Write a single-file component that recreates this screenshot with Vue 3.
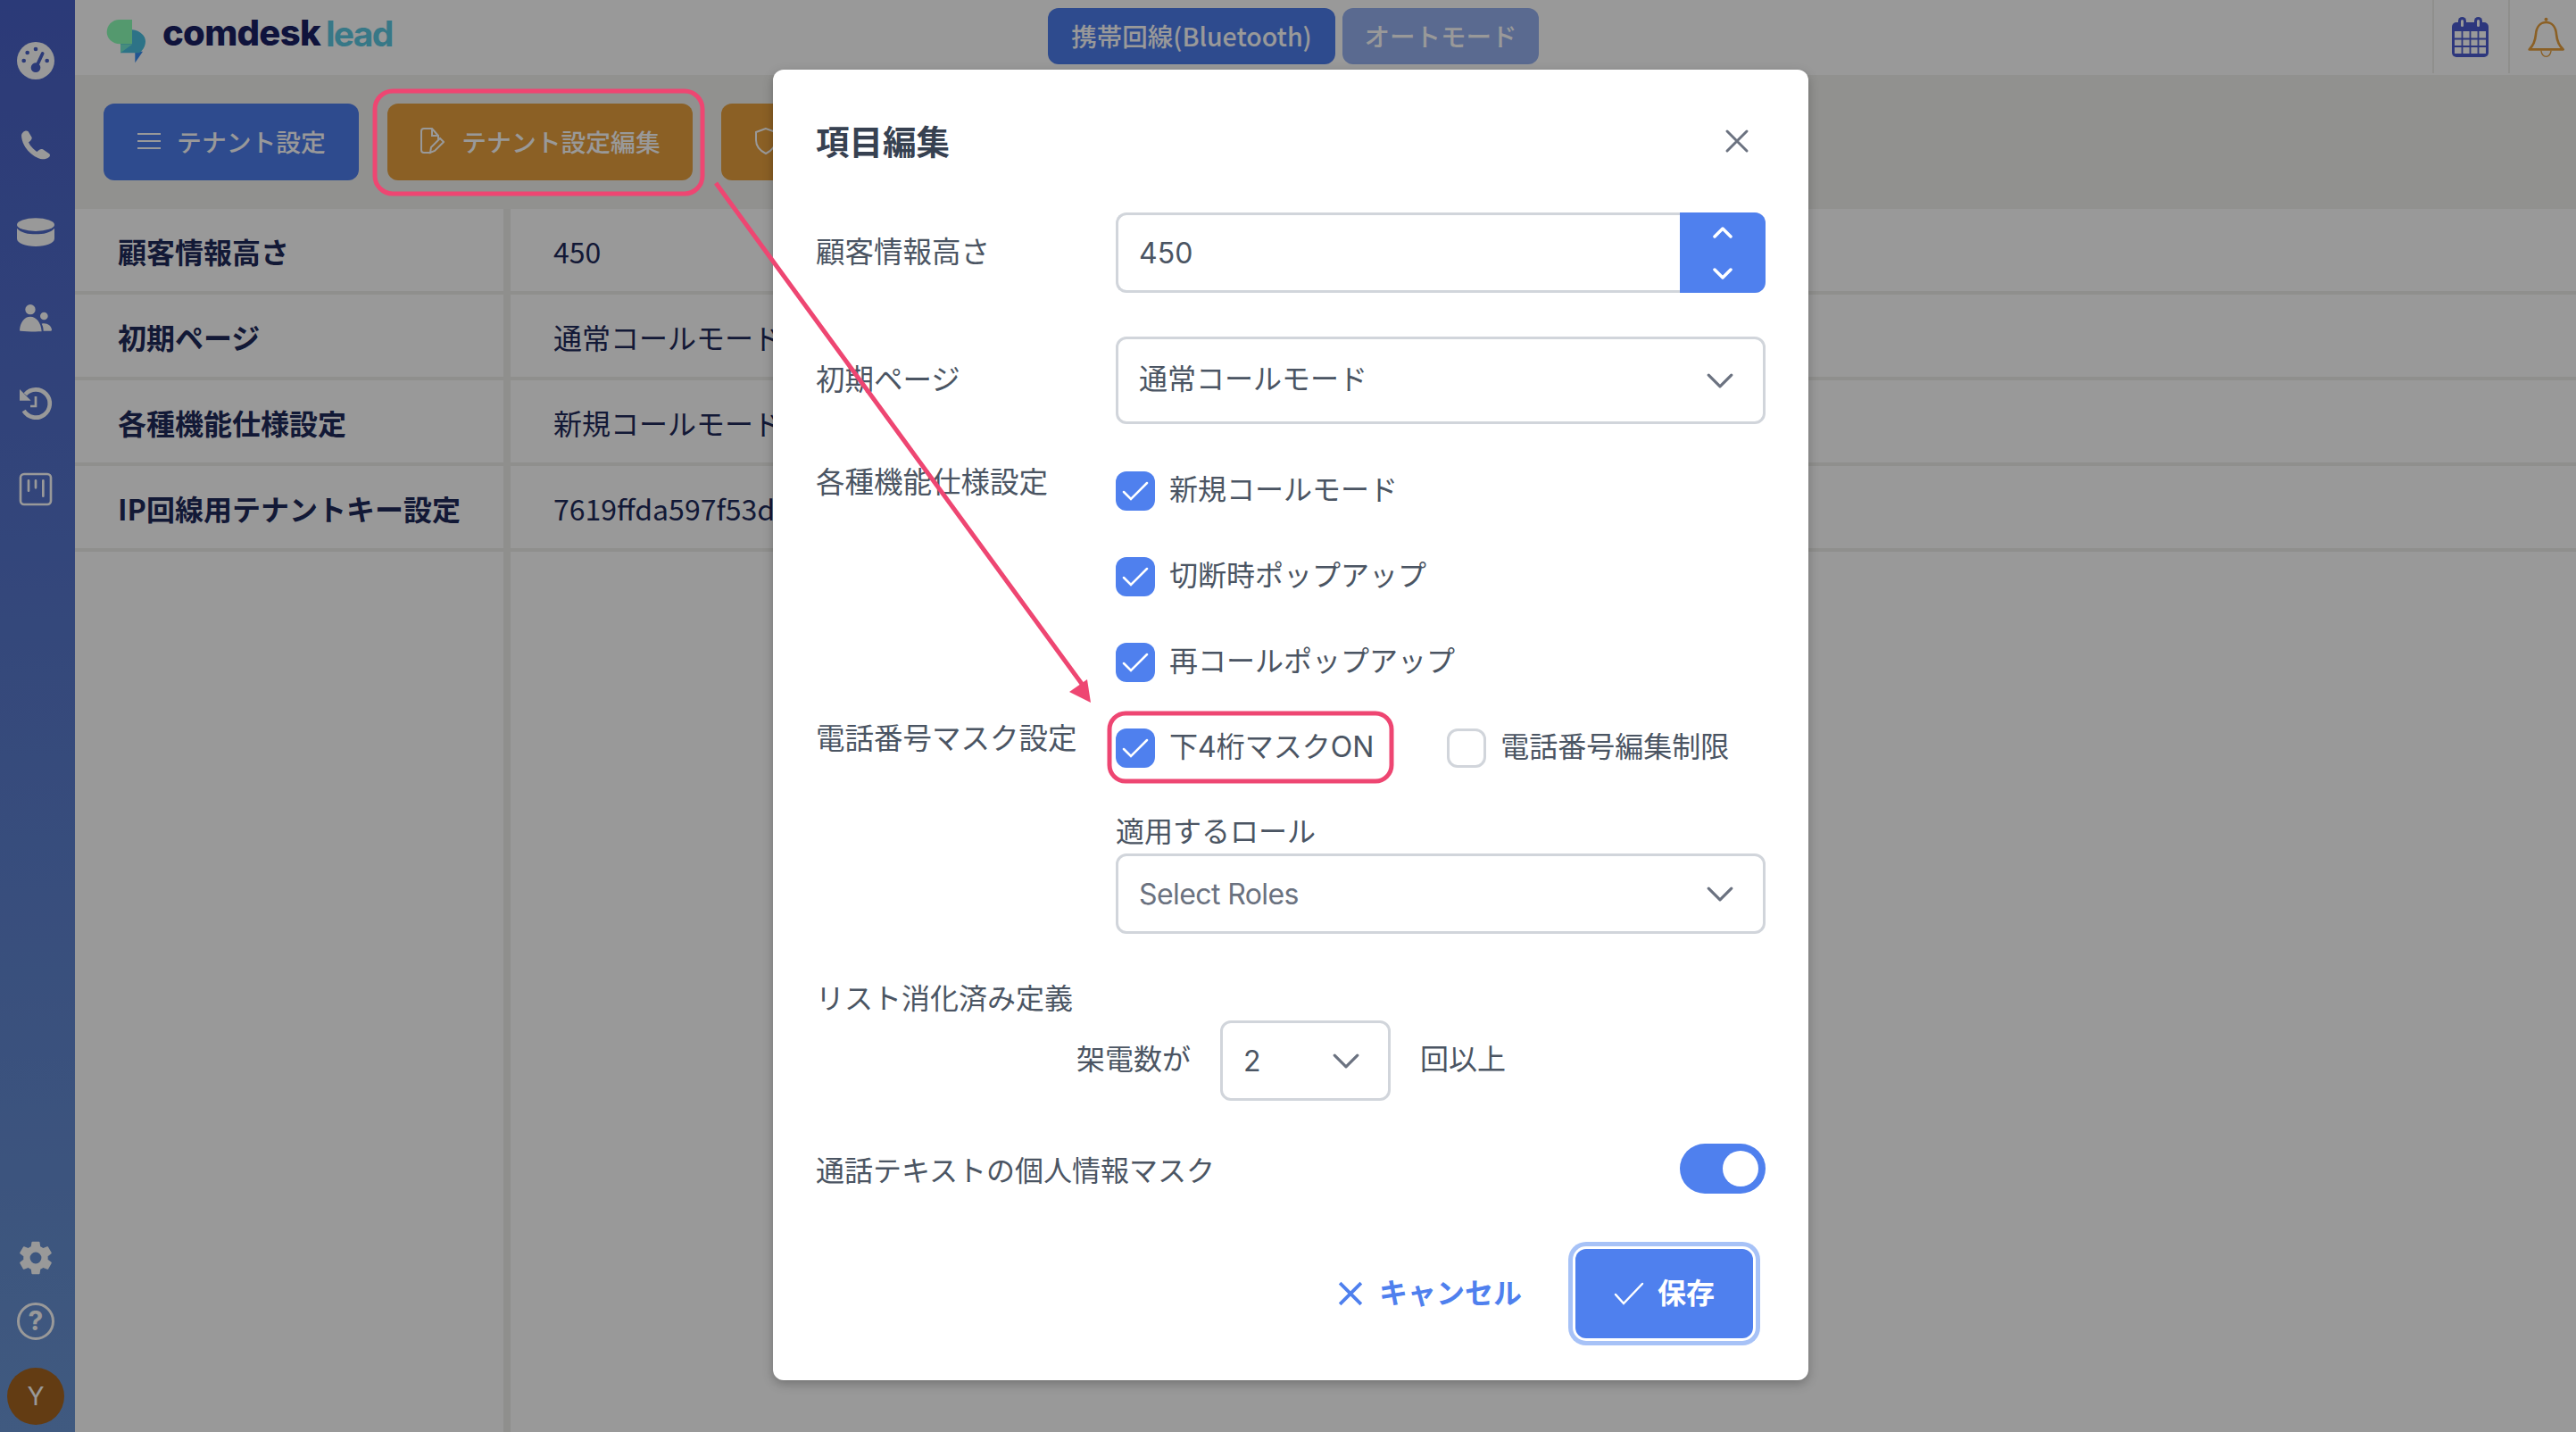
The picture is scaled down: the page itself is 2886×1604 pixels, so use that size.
<script setup>
const rows = [
  { label: '顧客情報高さ', value: '450' },
  { label: '初期ページ', value: '通常コールモード' },
  { label: '各種機能仕様設定', value: '新規コールモード' },
  { label: 'IP回線用テナントキー設定', value: '7619ffda597f53d' }
]
const features = ['新規コールモード', '切断時ポップアップ', '再コールポップアップ']
</script>

<template>
  <div class="page">
    <aside class="side">
      <div class="side-top">
        <svg class="ico" viewBox="54 47 132 132"><circle cx="120" cy="113" r="63" fill="#fff" /><g fill="#4961c8"><circle cx="92" cy="86" r="7" /><circle cx="120" cy="74" r="7" /><circle cx="80" cy="113" r="7" /><circle cx="158" cy="113" r="7" /><circle cx="120" cy="136" r="16" /></g><path d="M143 89 122 134" stroke="#4961c8" stroke-width="11" stroke-linecap="round" /></svg>
        <svg class="ico" viewBox="54 336 132 132"><path fill="#fff" d="M72 365C74 352 88 345 95 352L107 372C108 380 100 385 96 388 100 398 112 412 124 420 130 416 136 408 144 412L166 427C172 434 164 442 150 445 120 447 74 410 72 365Z" /></svg>
        <svg class="ico" viewBox="54 624 132 132"><ellipse cx="120" cy="665" rx="63" ry="22" fill="#fff" /><path fill="#fff" d="M57 677C70 692 95 697 120 697S170 692 183 677V712C183 728 155 738 120 738S57 728 57 712Z" /></svg>
        <svg class="ico" viewBox="54 40 132 132"><circle cx="102" cy="78" r="17" fill="#fff" /><circle cx="148" cy="100" r="13" fill="#fff" /><path fill="#fff" d="M66 148C68 120 82 102 102 102 122 102 138 122 140 152 115 153 85 152 70 150 67 150 66 150 66 148Z" /><path fill="#fff" d="M140 126C158 122 172 132 174 146 174 149 174 150 170 150L146 150C146 140 144 132 140 126Z" /></svg>
        <svg class="ico" viewBox="54 330 132 132" fill="none" stroke="#fff"><path d="M85 365A47 47 0 1 1 80 420" stroke-width="14" /><path d="M66 348V386H104Z" fill="#fff" stroke="none" /><path d="M120 372V405H102" stroke-width="8" /></svg>
        <svg class="ico" viewBox="54 617 132 132" fill="none" stroke="#fff" stroke-linecap="round"><rect x="69" y="632" width="102" height="102" rx="12" stroke-width="8" /><path d="M96 654V688M120 654V678M145 654V706" stroke-width="8" /></svg>
      </div>
      <div class="side-bottom">
        <svg class="ico" viewBox="0 0 24 24"><path fill="#fff" fill-rule="evenodd" d="M19.400 13c.04-.33.060-.66.060-1s-.020-.67-.060-1l2.100-1.650c.19-.15.24-.42.120-.64l-2-3.460c-.12-.22-.39-.3-.61-.22l-2.490 1c-.52-.4-1.080-.73-1.690-.98l-.38-2.650A.49.49 0 0 0 14 2h-4c-.25 0-.46.18-.49.42l-.38 2.650c-.61.25-1.170.59-1.690.98l-2.490-1a.5.5 0 0 0-.61.22l-2 3.460c-.13.220-.07.490.12.640L4.570 11c-.04.330-.07.670-.07 1s.03.670.07 1l-2.110 1.650c-.19.150-.24.420-.12.640l2 3.460c.12.220.39.300.61.220l2.490-1c.520.400 1.080.730 1.690.980l.38 2.650c.03.240.24.420.49.420h4c.25 0 .46-.18.49-.42l.38-2.650c.61-.25 1.170-.59 1.690-.98l2.490 1c.23.080.49 0 .61-.22l2-3.460c.12-.22.070-.49-.12-.64zM12 15.500a3.500 3.500 0 1 1 0-7 3.500 3.500 0 0 1 0 7z" /></svg>
        <svg class="ico help" viewBox="0 0 44 44"><circle cx="22" cy="22" r="19.500" fill="none" stroke="#fff" stroke-width="3" /><text x="22" y="32" text-anchor="middle" class="help-q">?</text></svg>
        <div class="avatar">Y</div>
      </div>
    </aside>

    <div class="main">
      <header class="top">
        <div class="logo">
          <svg class="logo-mark" viewBox="55 60 135 150">
            <path fill="#3a8ef2" d="M152 170H178L152 208Z" />
            <path fill="#4bc0e1" d="M142 97C170 100 187 118 187 136 187 155 175 170 165 175H103V140H142Z" />
            <path fill="#8cffb7" d="M100 63H142V145H102C75 145 57 125 57 105 57 82 75 63 100 63Z" />
            <path fill="#75e9d0" d="M103 175V146H142Z" />
          </svg>
          <span class="logo-a">comdesk</span><span class="logo-b">lead</span>
        </div>
        <div class="modes">
          <button class="mode on">携帯回線(Bluetooth)</button>
          <button class="mode off">オートモード</button>
        </div>
        <div class="top-right">
          <div class="top-cell cal-cell">
            <svg class="cal" viewBox="0 0 41 45">
              <rect x="0" y="6" width="41" height="39" rx="5" fill="#4b5cd0" />
              <rect x="7" y="0" width="9" height="14" rx="4.500" fill="#4b5cd0" />
              <rect x="25" y="0" width="9" height="14" rx="4.500" fill="#4b5cd0" />
              <rect x="10" y="3" width="3" height="8" rx="1.500" fill="#fff" />
              <rect x="28" y="3" width="3" height="8" rx="1.500" fill="#fff" />
              <path d="M3 16h35v25H3z" fill="#fff" />
              <path d="M3 24.500h35M3 33h35M11.500 16v25M20.500 16v25M29.500 16v25" stroke="#4b5cd0" stroke-width="1.800" />
            </svg>
          </div>
          <div class="top-cell bell-cell">
            <svg class="bell" viewBox="332 50 130 140" fill="none" stroke="#e8a03f" stroke-linejoin="round">
              <path d="M340 162C352 150 360 135 362 112 364 85 378 70 397 70 416 70 430 85 432 112 434 135 442 150 455 162Z" stroke-width="8" />
              <circle cx="397" cy="60" r="6" fill="#e8a03f" stroke="none" />
              <path d="M380 166C382 180 390 186 397 186 404 186 412 180 414 166" stroke-width="4" />
            </svg>
          </div>
        </div>
      </header>

      <div class="toolbar">
        <button class="tbtn blue">
          <svg viewBox="0 0 28 24" fill="none" stroke="#fff" stroke-width="2"><path d="M1 4h26M1 12h26M1 20h26" /></svg>
          テナント設定
        </button>
        <button class="tbtn orange edit">
          <svg viewBox="0 0 28 32" fill="none" stroke="#fff" stroke-width="2"><path d="M13 29H5c-2 0-3-1-3-3V5c0-2 1-3 3-3h9l7 8v5" /><path d="M14 2v8h7" /><path d="M12 29l1-6 10-10 4 4-10 10z" /></svg>
          テナント設定編集
        </button>
        <button class="tbtn orange sec">
          <svg viewBox="0 0 28 32" fill="none" stroke="#fff" stroke-width="2"><path d="M14 2 3 6v9c0 7 5 12 11 15 6-3 11-8 11-15V6z" /></svg>
        </button>
      </div>

      <div class="table">
        <template v-for="r in rows" :key="r.label">
          <div class="cell key">{{ r.label }}</div>
          <div class="cell val">{{ r.value }}</div>
        </template>
        <div class="fill"></div>
        <div></div>
      </div>
    </div>

    <div class="overlay">
      <div class="modal">
        <div class="m-head">
          <h2>項目編集</h2>
          <svg class="close" viewBox="0 0 28 28" fill="none" stroke="#6b7280" stroke-width="3" stroke-linecap="round"><path d="M3 3l22 22M25 3 3 25" /></svg>
        </div>

        <div class="row r-num">
          <label>顧客情報高さ</label>
          <div class="num">
            <div class="num-val">450</div>
            <div class="num-btn">
              <svg viewBox="0 0 22 13" fill="none" stroke="#fff" stroke-width="3.500" stroke-linecap="round" stroke-linejoin="round"><path d="M2 11l9-9 9 9" /></svg>
              <svg viewBox="0 0 22 13" fill="none" stroke="#fff" stroke-width="3.500" stroke-linecap="round" stroke-linejoin="round"><path d="M2 2l9 9 9-9" /></svg>
            </div>
          </div>
        </div>

        <div class="row r-page">
          <label>初期ページ</label>
          <div class="sel tall">
            <span class="lift">通常コールモード</span>
            <svg class="chev" viewBox="0 0 28 16" fill="none" stroke="#6b7280" stroke-width="3" stroke-linecap="round" stroke-linejoin="round"><path d="M2 2l12 12L26 2" /></svg>
          </div>
        </div>

        <div class="row r-feat">
          <label>各種機能仕様設定</label>
          <div class="checks">
            <div v-for="f in features" :key="f" class="chk">
              <span class="box on"><svg viewBox="0 0 30 22" fill="none" stroke="#fff" stroke-width="2.500" stroke-linecap="round"><path d="M2 12l8 8L28 2" /></svg></span>
              <span class="lift">{{ f }}</span>
            </div>
          </div>
        </div>

        <div class="row r-mask">
          <label>電話番号マスク設定</label>
          <div class="mask">
            <div class="chk-line">
              <div class="chk">
                <span class="box on"><svg viewBox="0 0 30 22" fill="none" stroke="#fff" stroke-width="2.500" stroke-linecap="round"><path d="M2 12l8 8L28 2" /></svg></span>
                <span class="lift">下4桁マスクON</span>
              </div>
              <div class="chk second">
                <span class="box"></span>
                <span class="lift">電話番号編集制限</span>
              </div>
            </div>
            <div class="role-label">適用するロール</div>
            <div class="sel">
              <span class="ph">Select Roles</span>
              <svg class="chev" viewBox="0 0 28 16" fill="none" stroke="#6b7280" stroke-width="3" stroke-linecap="round" stroke-linejoin="round"><path d="M2 2l12 12L26 2" /></svg>
            </div>
          </div>
        </div>

        <div class="list-title">リスト消化済み定義</div>
        <div class="list-line">
          <span class="lift">架電数が</span>
          <div class="sel small">
            <span>2</span>
            <svg class="chev" viewBox="0 0 28 16" fill="none" stroke="#6b7280" stroke-width="3" stroke-linecap="round" stroke-linejoin="round"><path d="M2 2l12 12L26 2" /></svg>
          </div>
          <span class="lift">回以上</span>
        </div>

        <div class="toggle-row">
          <span>通話テキストの個人情報マスク</span>
          <div class="toggle"><i></i></div>
        </div>

        <div class="m-foot">
          <button class="cancel">
            <svg viewBox="0 0 26 26" fill="none" stroke="#4f80ee" stroke-width="3.500"><path d="M2 2l22 22M24 2 2 24" /></svg>
            キャンセル
          </button>
          <button class="save">
            <svg viewBox="0 0 34 26" fill="none" stroke="#fff" stroke-width="2.500" stroke-linecap="round"><path d="M2 14l9 10L32 2" /></svg>
            保存
          </button>
        </div>
      </div>
    </div>

    <!-- 赤枠と矢印の注釈 -->
    <svg class="notes" viewBox="0 0 2886 1604" fill="none" stroke="#ee4672" stroke-width="5">
      <rect x="420" y="102" width="367" height="115" rx="20" />
      <rect x="1243" y="799" width="316" height="76" rx="18" />
      <path d="M802 205 1212 766" />
      <path d="M1222 787 1198 775 1218 761z" fill="#ee4672" stroke="none" />
    </svg>
  </div>
</template>

<style scoped>
.page {
  position: relative;
  display: flex;
  width: 2886px;
  height: 1604px;
  overflow: hidden;
  background: #fff;
  font-family: "Noto Sans CJK JP", "Noto Sans", sans-serif;
  font-size: 32px;
  color: #1f2a5a;
}

.side {
  width: 84px;
  flex: none;
  box-sizing: border-box;
  padding-right: 4px;
  display: flex;
  flex-direction: column;
  justify-content: space-between;
  align-items: center;
  background: linear-gradient(180deg, #4961c8, #6b96d5);
}
.side-top {
  display: flex;
  flex-direction: column;
  align-items: center;
  gap: 52px;
  padding-top: 46px;
}
.side-bottom {
  display: flex;
  flex-direction: column;
  align-items: center;
  padding-bottom: 8px;
}
.ico { width: 44px; height: 44px; display: block; }
.help { margin: 27px 0 30px; }
.help-q { font-family: "Inter", sans-serif; font-size: 30px; font-weight: 700; fill: #fff; }
.avatar {
  width: 64px;
  height: 64px;
  border-radius: 50%;
  background: #a56421;
  color: #fff;
  display: flex;
  align-items: center;
  justify-content: center;
  font-family: "Inter", sans-serif;
  font-size: 28px;
}

.main {
  flex: 1;
  display: flex;
  flex-direction: column;
  min-width: 0;
}
.top {
  height: 84px;
  flex: none;
  display: flex;
  align-items: flex-start;
  background: #fff;
}
.logo {
  width: 1090px;
  flex: none;
  display: flex;
  align-items: center;
  padding: 21px 0 0 35px;
  box-sizing: border-box;
  font-family: "Inter", sans-serif;
  font-weight: 800;
  font-size: 40px;
  line-height: 1;
}
.logo-mark { width: 45px; height: 50px; margin-right: 18px; align-self: flex-start; }
.logo-a { color: #1a2164; letter-spacing: -.700px; margin-top: -18px; }
.logo-b { color: #5cc8e1; letter-spacing: -1.700px; margin: -18px 0 0 6px; font-weight: 700; font-size: 39px; }
.modes { display: flex; gap: 8px; padding-top: 9px; }
.mode {
  height: 63px;
  border: none;
  border-radius: 12px;
  padding: 0 0 2px;
  color: #fff;
  font: 500 28.500px "Noto Sans CJK JP", sans-serif;
}
.mode.on { width: 322px; background: #4e7ded; }
.mode.off { width: 220px; background: #96b1f0; }
.top-right { margin-left: auto; display: flex; height: 82px; }
.top-cell {
  display: flex;
  align-items: center;
  justify-content: center;
  box-sizing: border-box;
  border-left: 2px solid #eeeeec;
  height: 82px;
}
.cal-cell { width: 85px; padding-right: 2px; }
.bell-cell { width: 76px; padding-left: 6px; }
.cal { width: 41px; height: 45px; }
.bell { width: 43px; height: 47px; }

.toolbar {
  height: 150px;
  flex: none;
  box-sizing: border-box;
  background: #f2f2ee;
  display: flex;
  gap: 32px;
  padding: 32px;
}
.tbtn {
  height: 86px;
  border: none;
  border-radius: 12px;
  color: #fff;
  font: 500 27.800px "Noto Sans CJK JP", sans-serif;
  display: flex;
  align-items: center;
  justify-content: center;
  gap: 17px;
  flex: none;
  padding: 0 0 3px;
}
.tbtn svg { width: 28px; height: 32px; }
.blue { width: 286px; background: #4e7ded; }
.orange { background: #e8a03f; }
.edit { width: 342px; gap: 19px; }
.sec { width: 400px; justify-content: flex-start; padding-left: 36px; }

.table {
  flex: 1;
  display: grid;
  grid-template-columns: 488px 1fr;
  grid-template-rows: repeat(4, 96px) 1fr;
}
.cell {
  display: flex;
  align-items: center;
  padding: 2px 0 0 48px;
  border-bottom: 4px solid #eeeeec;
  box-sizing: border-box;
  white-space: nowrap;
  overflow: hidden;
}
.key { font-weight: 700; border-right: 8px solid #eeeeec; }
.fill { border-right: 8px solid #eeeeec; }

.overlay {
  position: absolute;
  inset: 0;
  background: rgba(0, 0, 0, .4);
  display: flex;
  align-items: flex-start;
  padding: 78px 0 0 866px;
  box-sizing: border-box;
}
.modal {
  width: 1160px;
  height: 1468px;
  box-sizing: border-box;
  padding: 0 48px;
  background: #fff;
  border-radius: 12px;
  color: #4b5563;
  font-family: "Inter", "Noto Sans CJK JP", sans-serif;
  box-shadow: 0 4px 12px rgba(0, 0, 0, .25);
}
.m-head {
  height: 160px;
  display: flex;
  align-items: center;
  justify-content: space-between;
}
.m-head h2 {
  margin: -4px 0 0;
  font-size: 37.500px;
  font-weight: 700;
  color: #374151;
}
.close { width: 28px; height: 28px; margin-right: 18px; }
.lift { margin-top: -8px; }

.row {
  display: grid;
  grid-template-columns: 336px 1fr;
}
.row label { line-height: 44px; white-space: nowrap; font-size: 32.500px; }
.r-num { margin-bottom: 49px; }
.r-num label { padding-top: 23px; }
.r-page { margin-bottom: 53px; }
.r-page label { padding-top: 27px; }
.r-feat { margin-bottom: 52px; }
.r-feat label { margin-top: -9px; }
.r-mask label { margin-top: -10px; }

.num {
  height: 90px;
  display: flex;
  border: 3px solid #d1d5db;
  border-right: none;
  border-radius: 12px;
  box-sizing: border-box;
}
.num-val { flex: 1; display: flex; align-items: center; padding-left: 23px; }
.num-btn {
  width: 96px;
  margin: -3px 0;
  background: #4f80ee;
  border-radius: 0 12px 12px 0;
  display: flex;
  flex-direction: column;
  align-items: center;
  justify-content: center;
  gap: 33px;
}
.num-btn svg { width: 22px; height: 13px; }

.sel {
  height: 90px;
  box-sizing: border-box;
  border: 3px solid #d1d5db;
  border-radius: 12px;
  display: flex;
  align-items: center;
  justify-content: space-between;
  padding: 0 33px 0 23px;
}
.sel.tall { height: 98px; }
.sel.small { width: 191px; padding-right: 32px; }
.chev { width: 30px; height: 17px; }
.ph { color: #6b7280; letter-spacing: -.600px; }

.checks { display: flex; flex-direction: column; gap: 52px; }
.chk { display: flex; align-items: center; gap: 16px; height: 44px; white-space: nowrap; }
.box {
  width: 44px;
  height: 44px;
  flex: none;
  box-sizing: border-box;
  border: 3px solid #d1d5db;
  border-radius: 12px;
  display: flex;
  align-items: center;
  justify-content: center;
}
.box.on { background: #4f80ee; border: none; }
.box svg { width: 30px; height: 22px; }
.chk-line { display: flex; }
.second { margin-left: 82px; }
.role-label { margin-top: 50px; line-height: 44px; height: 46px; white-space: nowrap; }

.list-title { margin-top: 51px; line-height: 44px; }
.list-line {
  display: flex;
  align-items: center;
  gap: 33px;
  margin: 2px 0 48px 292px;
}
.toggle-row {
  display: flex;
  align-items: center;
  justify-content: space-between;
  height: 56px;
}
.toggle {
  width: 96px;
  height: 56px;
  border-radius: 28px;
  background: #4f80ee;
  display: flex;
  align-items: center;
  justify-content: flex-end;
  padding-right: 8px;
  box-sizing: border-box;
}
.toggle i { width: 40px; height: 40px; border-radius: 50%; background: #fff; display: block; }

.m-foot {
  display: flex;
  align-items: center;
  justify-content: flex-end;
  margin-top: 62px;
  padding-right: 14px;
}
.cancel {
  border: none;
  background: none;
  padding: 0 0 7px;
  margin-right: 60px;
  display: flex;
  align-items: center;
  gap: 18px;
  color: #4f80ee;
  font: 700 32px "Noto Sans CJK JP", sans-serif;
}
.cancel svg { width: 28px; height: 28px; margin-top: 7px; }
.save {
  width: 199px;
  height: 100px;
  border: none;
  border-radius: 12px;
  background: #4f80ee;
  color: #fff;
  font: 700 32px "Noto Sans CJK JP", sans-serif;
  display: flex;
  align-items: center;
  justify-content: center;
  gap: 15px;
  padding: 0 0 6px;
  box-shadow: 0 0 0 3px #fff, 0 0 0 8px #a7c2f7;
}
.save svg { width: 34px; height: 26px; margin-top: 6px; }

.notes {
  position: absolute;
  inset: 0;
  width: 2886px;
  height: 1604px;
  pointer-events: none;
}
</style>

<style>
html, body { margin: 0; overflow: hidden; }
</style>
